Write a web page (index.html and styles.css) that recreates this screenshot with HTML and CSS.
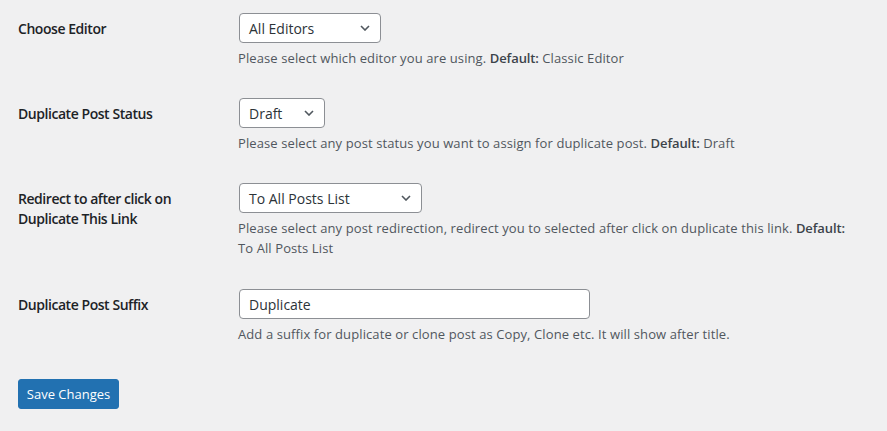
FILE: index.html
```html
<!DOCTYPE html>
<html lang="en">
<head>
<meta charset="utf-8">
<title>Duplicate Post Settings</title>
<link rel="stylesheet" href="styles.css">
</head>
<body>
<form class="settings">
  <div class="row">
    <div class="label">Choose Editor</div>
    <div class="field">
      <div class="select w-editor"><span>All Editors</span><svg class="chev" width="10" height="6" viewBox="0 0 10 6"><polyline points="1,1 5,5 9,1" fill="none" stroke="#50575e" stroke-width="1.6"/></svg></div>
      <p class="description">Please select which editor you are using. <b>Default:</b> Classic Editor</p>
    </div>
  </div>
  <div class="row">
    <div class="label">Duplicate Post Status</div>
    <div class="field">
      <div class="select w-status"><span>Draft</span><svg class="chev" width="10" height="6" viewBox="0 0 10 6"><polyline points="1,1 5,5 9,1" fill="none" stroke="#50575e" stroke-width="1.6"/></svg></div>
      <p class="description">Please select any post status you want to assign for duplicate post. <b>Default:</b> Draft</p>
    </div>
  </div>
  <div class="row row-tall">
    <div class="label">Redirect to after click on Duplicate This Link</div>
    <div class="field">
      <div class="select w-redirect"><span>To All Posts List</span><svg class="chev" width="10" height="6" viewBox="0 0 10 6"><polyline points="1,1 5,5 9,1" fill="none" stroke="#50575e" stroke-width="1.6"/></svg></div>
      <p class="description">Please select any post redirection, redirect you to selected after click on duplicate this link. <b>Default:</b> To All Posts List</p>
    </div>
  </div>
  <div class="row">
    <div class="label">Duplicate Post Suffix</div>
    <div class="field">
      <div class="input">Duplicate</div>
      <p class="description">Add a suffix for duplicate or clone post as Copy, Clone etc. It will show after title.</p>
    </div>
  </div>
  <div class="submit"><button type="button" class="button-primary">Save Changes</button></div>
</form>
</body>
</html>
```

FILE: styles.css
```css
html, body {
  margin: 0;
  padding: 0;
  background: #f0f0f1;
}
body {
  font-family: "Open Sans", "Noto Sans", "Liberation Sans", sans-serif;
  color: #3c434a;
  font-size: 13px;
}
.settings {
  padding: 0 29px 0 18px;
}
.row {
  display: grid;
  grid-template-columns: 220px 1fr;
  padding: 13px 0 17px;
}
.row-tall {
  padding-bottom: 18px;
}
.label {
  padding-top: 6px;
  width: 190px;
  font-size: 14px;
  font-weight: 600;
  letter-spacing: -0.45px;
  line-height: 20px;
  color: #1d2327;
}
.field {
  display: flex;
  flex-direction: column;
  align-items: flex-start;
}
.select, .input {
  box-sizing: border-box;
  height: 30px;
  background: #fff;
  border: 1px solid #8c8f94;
  border-radius: 4px;
  font-size: 14px;
  color: #2c3338;
  display: flex;
  align-items: center;
  padding: 0 10px 0 9px;
  margin-left: 1px;
}
.select {
  justify-content: space-between;
}
.w-editor { width: 142px; }
.w-status { width: 86px; }
.w-redirect { width: 183px; }
.input { width: 351px; }
.description {
  margin: 5px 0 0;
  line-height: 20px;
  font-size: 13px;
  letter-spacing: 0.1px;
  color: #50575e;
}
.description b {
  font-weight: 600;
  letter-spacing: -0.1px;
  color: #3c434a;
}
.submit {
  padding-top: 18px;
}
.button-primary {
  box-sizing: border-box;
  height: 30px;
  width: 101px;
  padding: 0;
  white-space: nowrap;
  background: #2271b1;
  border: 1px solid #2271b1;
  border-radius: 3px;
  color: #fff;
  font-family: inherit;
  font-size: 13px;
}
```
